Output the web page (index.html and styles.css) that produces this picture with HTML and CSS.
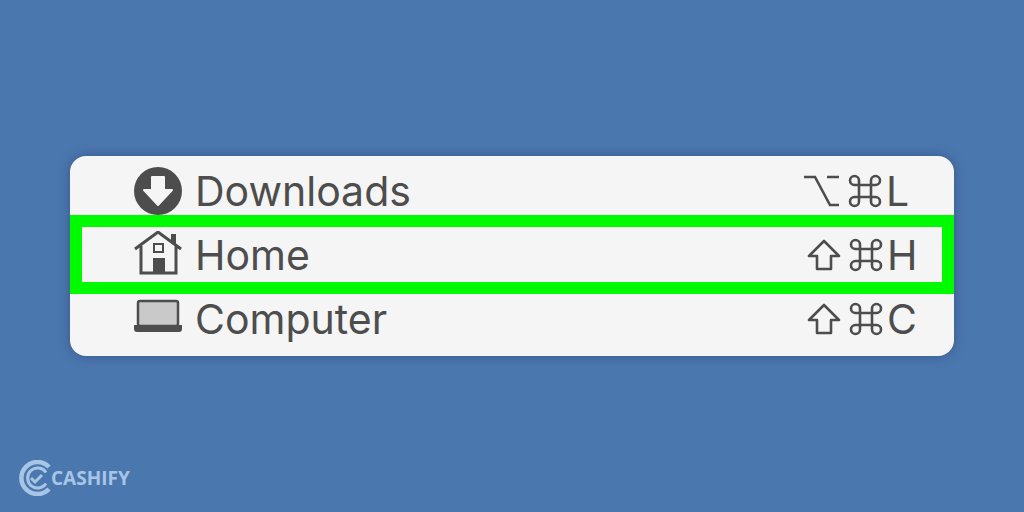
FILE: index.html
```html
<!DOCTYPE html>
<html>
<head>
    <title>Go menu</title>
    <link rel="stylesheet" href="styles.css">
</head>
<body>
    <div class="page">
        <div class="menu">
            <div class="row row-first">
                <svg class="icon" viewBox="0 0 48 48">
                    <circle cx="24" cy="24" r="24" fill="#4d4d4d"/>
                    <path d="M18 10h12v13h8L24 38 10 23h8z" fill="#f5f5f5" stroke="#f5f5f5" stroke-width="2" stroke-linejoin="round"/>
                </svg>
                <span class="label">Downloads</span>
                <div class="shortcut">
                    <svg class="key key-option" viewBox="0 0 36 32">
                        <path d="M1 2h11l15 28h9M24 2h12" fill="none" stroke="#4d4d4d" stroke-width="2.6"/>
                    </svg>
                    <svg class="key" viewBox="0 0 34 34"><use href="#cmd"/></svg>
                    <span class="letter">L</span>
                </div>
            </div>
            <div class="row row-selected">
                <svg class="icon" viewBox="0 0 48 48">
                    <path d="M7 19v24h35V19L24 2z" fill="#f5f5f5"/>
                    <path d="M1 18 24 1l23 17M7 15v27h35V15" fill="none" stroke="#4d4d4d" stroke-width="3"/>
                    <path d="M37 3h5v12l-5-4z" fill="#4d4d4d"/>
                    <rect x="20" y="13" width="9" height="8" fill="none" stroke="#4d4d4d" stroke-width="2"/>
                    <rect x="19" y="27" width="12" height="16" fill="#4d4d4d"/>
                </svg>
                <span class="label">Home</span>
                <div class="shortcut">
                    <svg class="key key-shift" viewBox="0 0 34 32"><use href="#shift"/></svg>
                    <svg class="key" viewBox="0 0 34 34"><use href="#cmd"/></svg>
                    <span class="letter">H</span>
                </div>
            </div>
            <div class="row row-last">
                <svg class="icon" viewBox="0 0 48 48">
                    <rect x="4" y="6" width="40" height="25" rx="2" fill="#c9c9c9" stroke="#4d4d4d" stroke-width="2.5"/>
                    <path d="M0 30h48v4a3 3 0 0 1-3 3H3a3 3 0 0 1-3-3z" fill="#4d4d4d"/>
                </svg>
                <span class="label">Computer</span>
                <div class="shortcut">
                    <svg class="key key-shift" viewBox="0 0 34 32"><use href="#shift"/></svg>
                    <svg class="key" viewBox="0 0 34 34"><use href="#cmd"/></svg>
                    <span class="letter">C</span>
                </div>
            </div>
        </div>

        <div class="logo">
            <svg class="logo-mark" viewBox="0 0 36 36">
                <path d="M31 7A16 16 0 1 0 31 29" fill="none" stroke="#a7c6e6" stroke-width="4.500"/>
                <path d="M28 12.500A10 10 0 1 0 28 23.500" fill="none" stroke="#a7c6e6" stroke-width="3"/>
                <path d="M13 18l4 4 7-7" fill="none" stroke="#a7c6e6" stroke-width="3"/>
            </svg>
            <span class="logo-text">CASHIFY</span>
        </div>
    </div>

    <!-- shared key symbols -->
    <svg class="defs" width="0" height="0">
        <defs>
            <path id="shift" d="M17 2 2 17h8v13h14V17h8z" fill="none" stroke="#4d4d4d" stroke-width="2.6" stroke-linejoin="round"/>
            <path id="cmd" d="M11 11h12v12H11zM11 11V6.500A4.500 4.500 0 1 0 6.500 11H11M23 11h4.500A4.500 4.500 0 1 0 23 6.500V11M23 23v4.500A4.500 4.500 0 1 0 27.500 23H23M11 23H6.500A4.500 4.500 0 1 0 11 27.500V23" fill="none" stroke="#4d4d4d" stroke-width="2.6"/>
        </defs>
    </svg>
</body>
</html>
```

FILE: styles.css
```css
body {
    margin: 0;
    font-family: Inter, "Liberation Sans", Arial, sans-serif;
    background-color: #4b77af;
}

.page {
    height: 512px;
    box-sizing: border-box;
    padding: 156px 0 16px;
    display: flex;
    flex-direction: column;
}

.menu {
    margin: 0 70px;
    background-color: #f5f5f5;
    border-radius: 16px;
    box-shadow: 0 0 12px rgba(30, 50, 90, 0.45);
    overflow: hidden;
}

.row {
    display: flex;
    align-items: center;
    padding: 0 37px 0 64px;
    color: #4d4d4d;
}

.row-first {
    height: 48px;
    padding-top: 11px;
}

.row-selected {
    height: 55px;
    border: 12px solid #00fa00;
    padding: 0 25px 0 52px;
}

.row-last {
    height: 50px;
    padding-bottom: 12px;
}

.icon {
    width: 48px;
    height: 48px;
    flex-shrink: 0;
}

.label {
    margin-left: 13px;
    font-size: 41px;
}

.shortcut {
    margin-left: auto;
    width: 114px;
    display: flex;
    align-items: center;
}

.key {
    width: 34px;
    height: 34px;
    flex-shrink: 0;
    margin-left: 45px;
}

.key-option {
    width: 36px;
    height: 32px;
    margin-left: 0;
}

.key-option + .key {
    margin-left: 9px;
}

.key-shift {
    margin-left: 4px;
    height: 32px;
}

.key-shift + .key {
    margin-left: 8px;
}

.letter {
    margin-left: 4px;
    font-size: 41px;
}

.logo {
    margin: auto 0 0 18px;
    display: flex;
    align-items: center;
}

.logo-mark {
    width: 36px;
    height: 36px;
}

.logo-text {
    margin-left: -3px;
    font-family: "Open Sans", sans-serif;
    font-size: 19px;
    font-weight: 700;
    color: #a7c6e6;
}

.defs {
    display: block;
}
```
